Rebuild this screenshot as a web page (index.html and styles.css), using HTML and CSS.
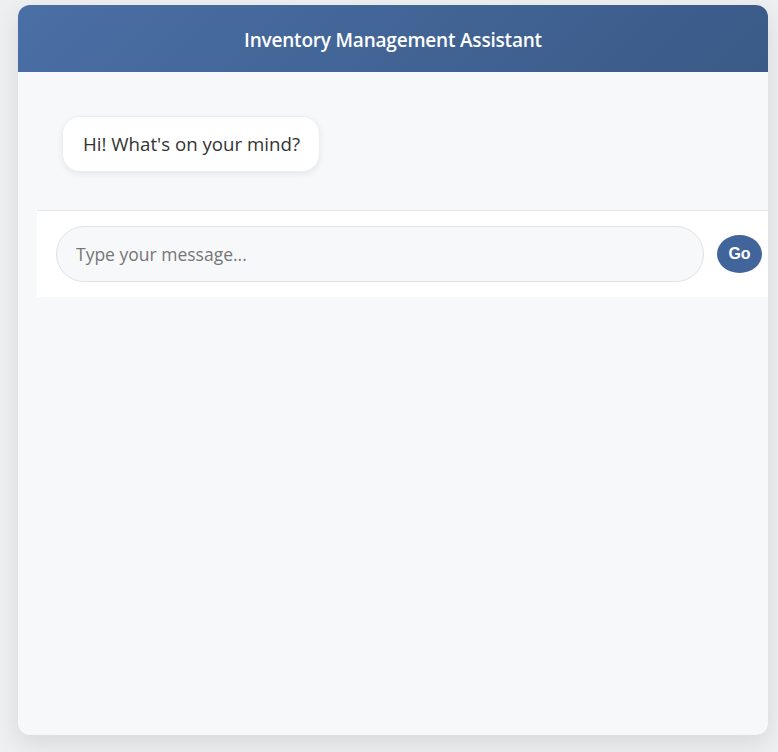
FILE: index.html
```html
<!DOCTYPE html>
<html lang="en">
<head>
<meta charset="utf-8">
<title>Inventory Management Assistant</title>
<link rel="stylesheet" href="styles.css">
</head>
<body>
<div class="app">
  <header class="app-header">Inventory Management Assistant</header>
  <main class="chat">
    <div class="messages">
      <div class="bubble">Hi! What's on your mind?</div>
    </div>
    <form class="composer">
      <input class="composer-input" type="text" placeholder="Type your message...">
      <button class="composer-send" type="button">Go</button>
    </form>
  </main>
</div>
</body>
</html>
```
FILE: styles.css
```css
* { box-sizing: border-box; }
html, body { margin: 0; padding: 0; }
body {
  background: #eeeff1;
  font-family: "Open Sans", "Noto Sans", sans-serif;
  width: 778px;
  height: 752px;
  overflow: hidden;
}
.app {
  margin: 5px 10px 0 18px;
  width: 750px;
  height: 730px;
  border-radius: 12px;
  background: #f7f8fa;
  box-shadow: 0 8px 24px rgba(0,0,0,0.10);
  overflow: hidden;
  display: flex;
  flex-direction: column;
}
.app-header {
  height: 67px;
  flex: none;
  display: flex;
  align-items: center;
  justify-content: center;
  padding-top: 2px;
  background: linear-gradient(135deg, #4a6fa5 0%, #3a5a87 100%);
  color: #ffffff;
  font-size: 19px;
  font-weight: 600;
  letter-spacing: -0.2px;
}
.chat { flex: 1; display: flex; flex-direction: column; }
.messages { padding: 44px 0 0 44px; }
.bubble {
  display: inline-block;
  background: #ffffff;
  border: 1px solid #eceef1;
  border-radius: 18px;
  padding: 14px 19px 14px 20px;
  font-size: 18.7px;
  color: #333333;
  line-height: 26px;
  box-shadow: 0 2px 6px rgba(0,0,0,0.07);
}
.composer {
  margin: 38px 0 0 19px;
  background: #ffffff;
  border-top: 1px solid #e6e8eb;
  padding: 15px 6px 15px 19px;
  display: flex;
  align-items: center;
  gap: 13px;
}
.composer-input {
  flex: 1;
  height: 56px;
  border-radius: 28px;
  border: 1px solid #dfe1e4;
  background: #f7f8fa;
  padding: 0 19px;
  font-family: "Open Sans", "Noto Sans", sans-serif;
  font-size: 17.5px;
  color: #333;
  outline: none;
}
.composer-input::placeholder { color: #767676; }
.composer-send {
  width: 45px;
  height: 38px;
  border-radius: 50%;
  border: none;
  background: #41649a;
  color: #ffffff;
  font-family: "Liberation Sans", Arial, sans-serif;
  font-weight: 700;
  font-size: 16px;
  padding: 0;
}
```
